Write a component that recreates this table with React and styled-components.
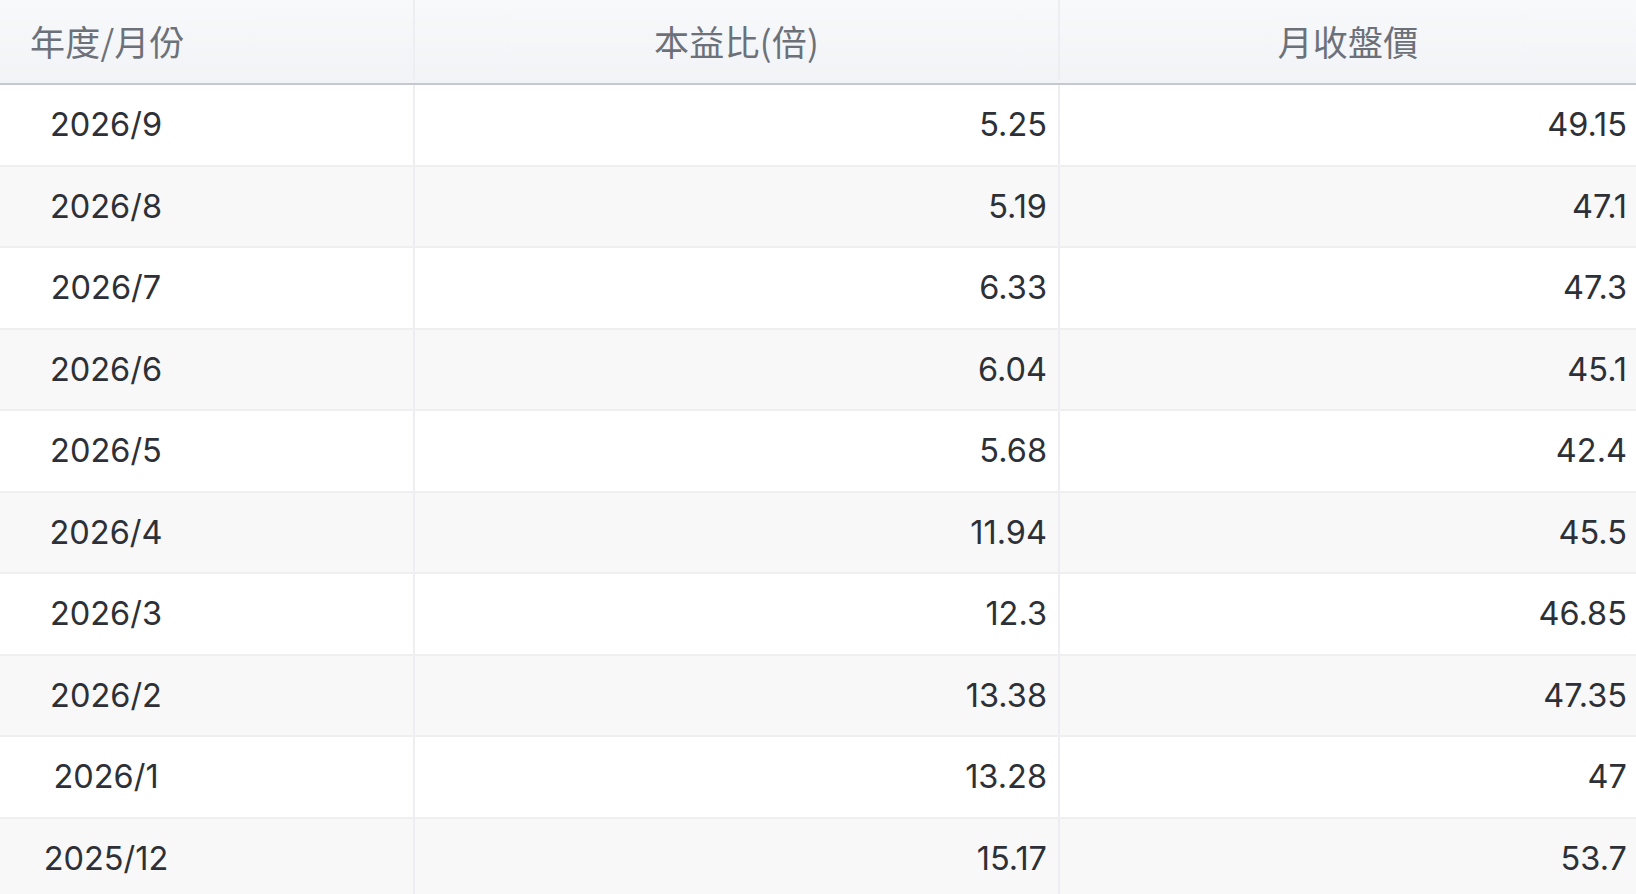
import * as React from "react";
import styled, { createGlobalStyle } from "styled-components";

const rows = [
  { month: "2026/9", pe: "5.25", close: "49.15" },
  { month: "2026/8", pe: "5.19", close: "47.1" },
  { month: "2026/7", pe: "6.33", close: "47.3" },
  { month: "2026/6", pe: "6.04", close: "45.1" },
  { month: "2026/5", pe: "5.68", close: "42.4" },
  { month: "2026/4", pe: "11.94", close: "45.5" },
  { month: "2026/3", pe: "12.3", close: "46.85" },
  { month: "2026/2", pe: "13.38", close: "47.35" },
  { month: "2026/1", pe: "13.28", close: "47" },
  { month: "2025/12", pe: "15.17", close: "53.7" },
];

const GlobalStyle = createGlobalStyle`
  html, body {
    margin: 0;
    padding: 0;
    background: #ffffff;
    overflow: hidden;
  }
  body {
    font-family: Inter, "Noto Sans CJK TC", sans-serif;
  }
`;

const Table = styled.div`
  width: 1636px;
  height: 894px;
  overflow: hidden;
  background: #ffffff;
`;

const Row = styled.div`
  display: grid;
  grid-template-columns: 415px 645px 1fr;
  height: ${(props) => (props.header ? "85px" : "81.5px")};
  box-sizing: border-box;
  padding-bottom: ${(props) => (props.header ? "3px" : "0")};
  background: ${(props) =>
    props.header
      ? "linear-gradient(180deg, #f8f9fb 0%, #f2f3f6 100%)"
      : props.striped
      ? "#f8f8f8"
      : "#ffffff"};
  border-bottom: 2px solid
    ${(props) => (props.header ? "#c5c8d0" : "#efefef")};
`;

const Cell = styled.div`
  display: flex;
  align-items: center;
  justify-content: ${(props) => props.align || "flex-end"};
  box-sizing: border-box;
  padding-right: ${(props) => props.pr || 0}px;
  border-right: ${(props) => (props.last ? "none" : "2px solid #eceef1")};
  min-width: 0;
`;

const HeadText = styled.span`
  font-family: "Noto Sans CJK TC", sans-serif;
  font-size: 35px;
  color: #6c7179;
  letter-spacing: 0.2px;
`;

const MonthBox = styled.span`
  width: 212px;
  text-align: center;
  font-size: 32.5px;
  color: #2d3137;
`;

const Num = styled.span`
  font-size: 32.5px;
  color: #2d3137;
`;

const HeadLeft = styled.span`
  padding-left: 30px;
`;

export default function App() {
  return (
    <>
      <GlobalStyle />
      <Table>
        <Row header>
          <Cell align="flex-start">
            <HeadLeft>
              <HeadText>年度/月份</HeadText>
            </HeadLeft>
          </Cell>
          <Cell align="center">
            <HeadText>本益比(倍)</HeadText>
          </Cell>
          <Cell align="center" last>
            <HeadText>月收盤價</HeadText>
          </Cell>
        </Row>
        {rows.map((r, i) => (
          <Row key={r.month} striped={i % 2 === 1}>
            <Cell align="flex-start">
              <MonthBox>{r.month}</MonthBox>
            </Cell>
            <Cell pr={11}>
              <Num>{r.pe}</Num>
            </Cell>
            <Cell pr={9} last>
              <Num>{r.close}</Num>
            </Cell>
          </Row>
        ))}
      </Table>
    </>
  );
}
